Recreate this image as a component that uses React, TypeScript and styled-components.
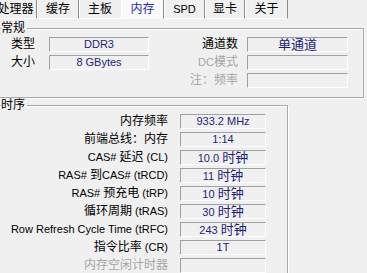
import React from "react";
import styled, { createGlobalStyle } from "styled-components";

const GlobalStyle = createGlobalStyle`
  html, body {
    margin: 0;
    padding: 0;
    background: #f0f0f0;
  }
`;

const Window = styled.div`
  width: 367px;
  height: 273px;
  overflow: hidden;
  background: #f0f0f0;
  font-family: "Liberation Sans", "Noto Sans CJK SC", sans-serif;
  font-size: 11px;
  color: #000;
`;

// ---- tabs
const TabStrip = styled.div`
  display: flex;
  height: 19px;
  margin-left: -6px;
`;

const Tab = styled.div<{ $w: number; $active?: boolean; $beforeActive?: boolean }>`
  box-sizing: border-box;
  flex: none;
  width: ${(p) => p.$w}px;
  height: 19px;
  padding-top: 1px;
  line-height: 17px;
  text-align: center;
  border-left: 1px solid #fff;
  border-right: 1px solid ${(p) => (p.$beforeActive ? "transparent" : "#8c8c8c")};
  border-bottom: 1px solid ${(p) => (p.$active ? "transparent" : "#fff")};
  background: ${(p) => (p.$active ? "#fafafa" : "#f0f0f0")};
  color: ${(p) => (p.$active ? "#2a2ab4" : "#000")};
`;

// ---- group boxes
const Group = styled.section<{ $w: number; $gap: number }>`
  position: relative;
  box-sizing: border-box;
  width: ${(p) => p.$w}px;
  margin: ${(p) => p.$gap}px 0 0 -4px;
  padding: 8px 0 9px;
  border: 1px solid #a8a8a8;
  box-shadow: inset 1px 1px 0 #fff, 1px 1px 0 #fff;
`;

const GroupTitle = styled.span`
  position: absolute;
  left: 4px;
  top: -8px;
  padding: 0 2px 0 0;
  background: #f0f0f0;
  line-height: 14px;
  font-size: 12px;
`;

const Grid = styled.div<{ $cols: string }>`
  display: grid;
  grid-template-columns: ${(p) => p.$cols};
  grid-auto-rows: 15px;
  row-gap: 3px;
`;

const Label = styled.div<{ $pad: number; $dim?: boolean }>`
  padding-right: ${(p) => p.$pad}px;
  text-align: right;
  line-height: 15px;
  white-space: nowrap;
  color: ${(p) => (p.$dim ? "#a6a6a6" : "#000")};
`;

const Field = styled.div`
  box-sizing: border-box;
  height: 15px;
  border: 1px solid;
  border-color: #a0a0a0 #fff #fff #a0a0a0;
  line-height: 13px;
  text-align: center;
  white-space: nowrap;
  color: #1e1e78;
`;

const Han = styled.span<{ $size: number }>`
  font-size: ${(p) => p.$size}px;
`;

// latin runs stay at 11px, CJK runs get their own size
const Mixed = ({ text, han }: { text: string; han: number }) => (
  <>
    {text.split(/([\u3000-\u9fff\uff00-\uffef]+)/).map((part, i) =>
      i % 2 ? (
        <Han key={i} $size={han}>
          {part}
        </Han>
      ) : (
        part
      )
    )}
  </>
);

const tabs = [
  { label: "处理器", w: 43 },
  { label: "缓存", w: 42 },
  { label: "主板", w: 42 },
  { label: "内存", w: 43, active: true },
  { label: "SPD", w: 41 },
  { label: "显卡", w: 40 },
  { label: "关于", w: 43 },
];

const timings: { label: string; value?: string; dim?: boolean }[] = [
  { label: "内存频率", value: "933.2 MHz" },
  { label: "前端总线：内存", value: "1:14" },
  { label: "CAS# 延迟 (CL)", value: "10.0 时钟" },
  { label: "RAS# 到CAS# (tRCD)", value: "11 时钟" },
  { label: "RAS# 预充电 (tRP)", value: "10 时钟" },
  { label: "循环周期 (tRAS)", value: "30 时钟" },
  { label: "Row Refresh Cycle Time (tRFC)", value: "243 时钟" },
  { label: "指令比率 (CR)", value: "1T" },
  { label: "内存空闲计时器", dim: true },
];

export default function App() {
  return (
    <Window>
      <GlobalStyle />
      <TabStrip>
        {tabs.map((t, i) => (
          <Tab key={t.label} $w={t.w} $active={t.active} $beforeActive={tabs[i + 1]?.active}>
            <Mixed text={t.label} han={12} />
          </Tab>
        ))}
      </TabStrip>

      <Group $w={368} $gap={9}>
        <GroupTitle>常规</GroupTitle>
        <Grid $cols="52px 100px 98px 101px">
          <Label $pad={14}>
            <Mixed text="类型" han={12} />
          </Label>
          <Field>DDR3</Field>
          <Label $pad={9}>
            <Mixed text="通道数" han={12} />
          </Label>
          <Field>
            <Mixed text="单通道" han={13} />
          </Field>

          <Label $pad={14}>
            <Mixed text="大小" han={12} />
          </Label>
          <Field>8 GBytes</Field>
          <Label $pad={9} $dim>
            <Mixed text="DC模式" han={12} />
          </Label>
          <Field />

          <div />
          <div />
          <Label $pad={9} $dim>
            <Mixed text="注：频率" han={12} />
          </Label>
          <Field />
        </Grid>
      </Group>

      <Group $w={292} $gap={7}>
        <GroupTitle>时序</GroupTitle>
        <Grid $cols="183px 86px">
          {timings.map((row) => (
            <React.Fragment key={row.label}>
              <Label $pad={12} $dim={row.dim}>
                <Mixed text={row.label} han={12} />
              </Label>
              <Field>{row.value && <Mixed text={row.value} han={13} />}</Field>
            </React.Fragment>
          ))}
        </Grid>
      </Group>
    </Window>
  );
}
